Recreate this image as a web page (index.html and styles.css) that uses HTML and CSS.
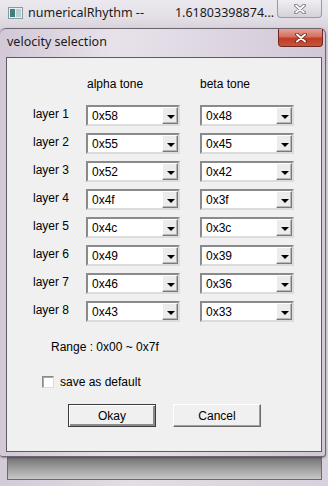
FILE: index.html
```html
<!DOCTYPE html>
<html>
<head>
<meta charset="utf-8">
<link rel="stylesheet" href="styles.css">
</head>
<body>
<div class="bgwin">
  <div class="bgtitle">
    <svg class="appicon" width="15" height="12" viewBox="0 0 15 12">
      <rect x="0.5" y="0.5" width="14" height="11" fill="#e8eef0" stroke="#8a9aa0"/>
      <rect x="2" y="2" width="5" height="8" fill="#3f7f80"/>
      <rect x="8" y="2" width="5" height="8" fill="#b8cfd2"/>
    </svg>
    <span class="bgname">numericalRhythm --</span>
    <span class="bgnum">1.61803398874...</span>
    <div class="closebtn grey">
      <svg width="12" height="10" viewBox="0 0 12 10"><path d="M2 1.5 L10 8.5 M10 1.5 L2 8.5" stroke="#6f6f74" stroke-width="3.6" stroke-linecap="round"/><path d="M2 1.5 L10 8.5 M10 1.5 L2 8.5" stroke="#ffffff" stroke-width="1.8" stroke-linecap="round"/></svg>
    </div>
  </div>

  <div class="dialog">
    <div class="dtitle">
      <span class="dname">velocity selection</span>
      <div class="closebtn red">
        <svg width="12" height="10" viewBox="0 0 12 10"><path d="M2 1.5 L10 8.5 M10 1.5 L2 8.5" stroke="#6a1e14" stroke-width="3.6" stroke-linecap="round"/><path d="M2 1.5 L10 8.5 M10 1.5 L2 8.5" stroke="#ffffff" stroke-width="1.9" stroke-linecap="round"/></svg>
      </div>
    </div>
    <div class="client">
      <div class="heads">
        <span class="head">alpha tone</span>
        <span class="head">beta tone</span>
      </div>
      <div class="grid">
        <span class="lbl">layer 1</span>
        <div class="combo"><span>0x58</span><i class="drop"></i></div>
        <div class="combo"><span>0x48</span><i class="drop"></i></div>
        <span class="lbl">layer 2</span>
        <div class="combo"><span>0x55</span><i class="drop"></i></div>
        <div class="combo"><span>0x45</span><i class="drop"></i></div>
        <span class="lbl">layer 3</span>
        <div class="combo"><span>0x52</span><i class="drop"></i></div>
        <div class="combo"><span>0x42</span><i class="drop"></i></div>
        <span class="lbl">layer 4</span>
        <div class="combo"><span>0x4f</span><i class="drop"></i></div>
        <div class="combo"><span>0x3f</span><i class="drop"></i></div>
        <span class="lbl">layer 5</span>
        <div class="combo"><span>0x4c</span><i class="drop"></i></div>
        <div class="combo"><span>0x3c</span><i class="drop"></i></div>
        <span class="lbl">layer 6</span>
        <div class="combo"><span>0x49</span><i class="drop"></i></div>
        <div class="combo"><span>0x39</span><i class="drop"></i></div>
        <span class="lbl">layer 7</span>
        <div class="combo"><span>0x46</span><i class="drop"></i></div>
        <div class="combo"><span>0x36</span><i class="drop"></i></div>
        <span class="lbl">layer 8</span>
        <div class="combo"><span>0x43</span><i class="drop"></i></div>
        <div class="combo"><span>0x33</span><i class="drop"></i></div>
      </div>
      <div class="range">Range : 0x00 ~ 0x7f</div>
      <div class="check"><span class="box"></span><span>save as default</span></div>
      <div class="buttons">
        <div class="btn default">Okay</div>
        <div class="btn">Cancel</div>
      </div>
    </div>
  </div>

  <div class="bgbottom"><div class="bgclient"></div></div>
</div>
</body>
</html>
```

FILE: styles.css
```css
html, body {
  margin: 0;
  padding: 0;
}
body {
  width: 328px;
  height: 486px;
  overflow: hidden;
  background: #d6d0da;
  font-family: "Liberation Sans", Arial, sans-serif;
  font-size: 12px;
  color: #000;
}
.bgwin {
  width: 328px;
  height: 486px;
  display: flex;
  flex-direction: column;
  background: linear-gradient(90deg, #d3cad7 0%, #e2dde6 40%, #d8d0dc 100%);
}
.bgtitle {
  height: 28px;
  flex: none;
  display: flex;
  align-items: flex-start;
  position: relative;
  background: linear-gradient(180deg, #ebe8ee 0%, #e4e0e7 60%, #d9d2dc 100%);
  font-family: "Noto Sans", "Open Sans", sans-serif;
  font-size: 12.5px;
  color: #1a1a1a;
}
.appicon {
  margin: 7px 0 0 8px;
  flex: none;
}
.bgname {
  margin: 4px 0 0 5px;
  white-space: nowrap;
}
.bgnum {
  margin: 4px 0 0 31px;
  white-space: nowrap;
}
.closebtn {
  position: absolute;
  right: 6px;
  width: 45px;
  display: flex;
  align-items: center;
  justify-content: center;
  box-sizing: border-box;
}
.closebtn.grey {
  top: 0;
  height: 18px;
  border: 1px solid #9d98a2;
  border-top: none;
  border-radius: 0 0 4px 4px;
  background: linear-gradient(180deg, #f0eef2 0%, #e3e0e6 50%, #d5d1d9 100%);
}
.closebtn.red {
  top: 0;
  height: 18px;
  border: 1px solid #6e2a22;
  border-top: none;
  border-radius: 0 0 4px 4px;
  background: linear-gradient(180deg, #e5a193 0%, #d3705f 45%, #bf3c26 55%, #c9543a 100%);
}
.dialog {
  height: 429px;
  flex: none;
  width: 326px;
  box-sizing: border-box;
  padding: 0 3px 4px 6px;
  display: flex;
  flex-direction: column;
  border-radius: 6px 6px 3px 3px;
  border: 1px solid #6d6670;
  border-left: none;
  margin-right: 2px;
  background: linear-gradient(90deg, #d2c8d6 0%, #e7e2ea 35%, #e1dbe5 55%, #d2c7d5 100%);
  box-shadow: 0 1px 2px rgba(0,0,0,0.3);
  position: relative;
}
.dtitle {
  height: 28px;
  flex: none;
  position: relative;
  font-family: "Noto Sans", "Open Sans", sans-serif;
  font-size: 12.5px;
  color: #1a1a1a;
}
.dname {
  display: block;
  padding: 4px 0 0 1px;
  white-space: nowrap;
}
.dtitle .closebtn.red {
  right: -1px;
}
.client {
  flex: 1;
  background: #f0f0f0;
  border: 1px solid #5f5a62;
  display: flex;
  flex-direction: column;
}
.heads {
  display: flex;
  padding: 19px 0 0 80px;
  height: 14px;
  line-height: 14px;
}
.head {
  width: 113px;
  white-space: nowrap;
}
.grid {
  margin-top: 14px;
  padding-left: 26px;
  display: grid;
  grid-template-columns: 33px 94px 94px;
  grid-auto-rows: 21px;
  column-gap: 20px;
  row-gap: 7px;
}
.lbl {
  white-space: nowrap;
  line-height: 14px;
  padding-top: 2px;
}
.combo {
  box-sizing: border-box;
  height: 21px;
  background: #fff;
  border: 2px solid;
  border-color: #8a8a8a #dcdcdc #dcdcdc #8a8a8a;
  display: flex;
  align-items: center;
  justify-content: space-between;
  padding-left: 4px;
}
.combo span {
  line-height: 14px;
}
.drop {
  width: 16px;
  height: 17px;
  box-sizing: border-box;
  background: #ececec;
  border: 1px solid;
  border-color: #ffffff #7a7a7a #7a7a7a #ffffff;
  box-shadow: inset -1px -1px 0 #b8b8b8;
  position: relative;
  flex: none;
}
.drop::after {
  content: "";
  position: absolute;
  left: 3.5px;
  top: 6.5px;
  border-left: 4px solid transparent;
  border-right: 4px solid transparent;
  border-top: 4px solid #000;
}
.range {
  margin: 18px 0 0 44px;
  line-height: 14px;
}
.check {
  margin: 21px 0 0 35px;
  display: flex;
  align-items: center;
  height: 13px;
}
.box {
  width: 12px;
  height: 12px;
  box-sizing: border-box;
  background: #fff;
  border: 1px solid;
  border-color: #8a8a8a #dcdcdc #dcdcdc #8a8a8a;
  box-shadow: inset 1px 1px 0 #a8a8a8;
  margin-right: 6px;
  flex: none;
}
.check span:last-child {
  line-height: 14px;
}
.buttons {
  margin: 16px 0 0 61px;
  display: flex;
  gap: 17px;
}
.btn {
  width: 88px;
  height: 23px;
  box-sizing: border-box;
  display: flex;
  align-items: center;
  justify-content: center;
  background: #f0f0f0;
  border: 1px solid;
  border-color: #ffffff #6a6a6a #6a6a6a #ffffff;
  box-shadow: inset -1px -1px 0 #a0a0a0;
}
.btn.default {
  border-color: #3c3c3c;
  box-shadow: inset 1px 1px 0 #ffffff, inset -2px -2px 0 #8a8a8a;
}
.bgbottom {
  flex: 1;
  padding: 0 6px 6px 7px;
  display: flex;
  flex-direction: column;
}
.bgclient {
  flex: 1;
  border: 1px solid #6b6b6b;
  border-top: none;
  background: linear-gradient(180deg, #707070 0%, #999999 45%, #c8c8c8 100%);
}
```
